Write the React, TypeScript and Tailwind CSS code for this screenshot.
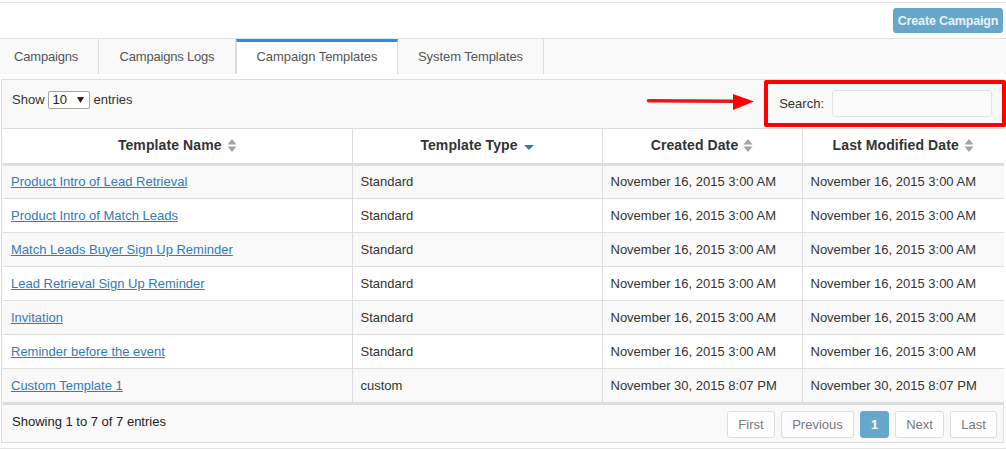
import React from "react";

const rows = [
  ["Product Intro of Lead Retrieval", "Standard", "November 16, 2015 3:00 AM"],
  ["Product Intro of Match Leads", "Standard", "November 16, 2015 3:00 AM"],
  ["Match Leads Buyer Sign Up Reminder", "Standard", "November 16, 2015 3:00 AM"],
  ["Lead Retrieval Sign Up Reminder", "Standard", "November 16, 2015 3:00 AM"],
  ["Invitation", "Standard", "November 16, 2015 3:00 AM"],
  ["Reminder before the event", "Standard", "November 16, 2015 3:00 AM"],
  ["Custom Template 1", "custom", "November 30, 2015 8:07 PM"],
];

function Sort({ active }: { active?: boolean }) {
  if (active)
    return (
      <svg width="10" height="5" viewBox="0 0 10 5" className="ml-[6px] mt-[5px] inline-block">
        <path d="M0 0h10L5 5z" fill="#337ab7" />
      </svg>
    );
  return (
    <svg width="10" height="13" viewBox="0 0 10 13" className="ml-[5px] inline-block">
      <path d="M5 0l4.500 5.500h-9zM5 13L.5 7.500h9z" fill="#a3a3a3" />
    </svg>
  );
}

function Th({ children, active, w, last }: { children: string; active?: boolean; w: string; last?: boolean }) {
  return (
    <th className={`${w} h-[36px] p-0 pb-[2px] text-center text-[14px] font-bold tracking-[0.1px] text-[#333] border-b-[3px] border-[#ddd] ${last ? "" : "border-r"}`}>
      <span className="inline-flex items-center justify-center">
        {children}
        <Sort active={active} />
      </span>
    </th>
  );
}

function PageBtn({ children, active, w }: { children: string; active?: boolean; w: string }) {
  return (
    <span
      className={`${w} flex h-[27px] items-center justify-center rounded-[3px] border ${
        active ? "border-[#67a8ca] bg-[#67a8ca] font-bold text-white" : "border-[#ddd] bg-white text-[#777]"
      }`}
    >
      {children}
    </span>
  );
}

function Tab({ children, active, w, end, tight }: { children: string; active?: boolean; w: string; end?: boolean; tight?: boolean }) {
  return (
    <div
      className={`${w} flex h-[35px] items-center border-r border-[#ddd] text-[#555] ${tight ? "tracking-[-0.2px]" : "tracking-[-0.05px]"} ${end ? "justify-end pr-[20px]" : "justify-center"} ${
        active ? "-mb-px border-l border-t-[3px] border-t-[#2e8fd6] bg-white pb-[3px]" : ""
      }`}
    >
      {children}
    </div>
  );
}

export default function App() {
  return (
    <div
      className="relative h-[449px] w-[1006px] overflow-hidden bg-white pt-[2px] text-[13px] leading-[18px] text-[#333]"
      style={{ fontFamily: '"Liberation Sans", Arial, sans-serif' }}
    >
      <div className="flex h-[37px] justify-end border-t border-b border-[#e3e3e3] pr-[3px] pt-[5px]">
        <button className="h-[25px] w-[110px] whitespace-nowrap rounded-[3px] bg-[#67a8ca] text-[12.5px] font-bold tracking-[-0.15px] text-[#e8f3f8]">Create Campaign</button>
      </div>
      <div className="flex h-[35px] bg-[#f9f9f9]">
        <Tab w="w-[99px]" end tight>Campaigns</Tab>
        <Tab w="w-[137px]" tight>Campaigns Logs</Tab>
        <Tab w="w-[162px]" active>Campaign Templates</Tab>
        <Tab w="w-[146px]">System Templates</Tab>
      </div>
      <div className="mx-[1px] mt-[5px] h-[364px] w-[1003px] border border-[#ddd] bg-[#f9f9f9]">
        <div className="flex h-[48px] items-start justify-between pl-[10px] pt-[10px]">
          <div className="mt-[1px] flex items-center">
            Show
            <span className="ml-[3px] mr-[4px] flex h-[18px] w-[42px] items-center justify-between rounded-[2px] border border-[#a6a6a6] bg-white pl-[4px] pr-[5px] text-[#222]">
              10
              <svg width="7" height="6" viewBox="0 0 7 6"><path d="M0 0h7L3.500 6z" fill="#222" /></svg>
            </span>
            entries
          </div>
          <div className="mr-[11px] flex items-center">
            Search:
            <span className="ml-[8px] block h-[27px] w-[160px] rounded-[3px] border border-[#e3e3e3] bg-[#fafafa]" />
          </div>
        </div>
        <table className="ml-[1px] w-[1001px] table-fixed border-collapse border-t border-[#ddd] bg-white">
          <thead>
            <tr>
              <Th w="w-[349px]">Template Name</Th>
              <Th w="w-[250px]" active>Template Type</Th>
              <Th w="w-[200px]">Created Date</Th>
              <Th w="w-[202px]" last>Last Modified Date</Th>
            </tr>
          </thead>
          <tbody>
            {rows.map((r, i) => (
              <tr key={r[0]} className={`${i % 2 === 0 ? "bg-[#f9f9f9]" : "bg-white"} h-[34px] border-b border-[#ddd]`}>
                <td className="border-r border-[#ddd] px-[8px] py-0">
                  <span className="text-[#337ab7] underline">{r[0]}</span>
                </td>
                <td className="border-r border-[#ddd] px-[8px] py-0">{r[1]}</td>
                <td className="border-r border-[#ddd] px-[8px] py-0">{r[2]}</td>
                <td className="px-[8px] py-0">{r[2]}</td>
              </tr>
            ))}
          </tbody>
        </table>
        <div className="ml-[1px] flex items-start justify-between border-t-2 border-[#ddd] pl-[9px] pr-[6px] pt-[6px]">
          <span className="mt-[2px] text-[#222]">Showing 1 to 7 of 7 entries</span>
          <div className="flex gap-[6px]">
            <PageBtn w="w-[48px]">First</PageBtn>
            <PageBtn w="w-[73px]">Previous</PageBtn>
            <PageBtn w="w-[29px]" active>1</PageBtn>
            <PageBtn w="w-[49px]">Next</PageBtn>
            <PageBtn w="w-[47px]">Last</PageBtn>
          </div>
        </div>
      </div>
      <div className="mt-[5px] border-t border-[#e3e3e3]" />

      <div className="absolute left-[764px] top-[80px] h-[47px] w-[242px] rounded-[2px] border-[4px] border-[#f00]" />
      <svg className="absolute left-[645px] top-[90px]" width="110" height="22" viewBox="0 0 110 22">
        <path d="M3.500 10.800 L90 11.200" stroke="#e8171c" strokeWidth="3.500" strokeLinecap="round" />
        <path d="M88 4 L109 11.500 L88 20z" fill="#f00" />
      </svg>
    </div>
  );
}
